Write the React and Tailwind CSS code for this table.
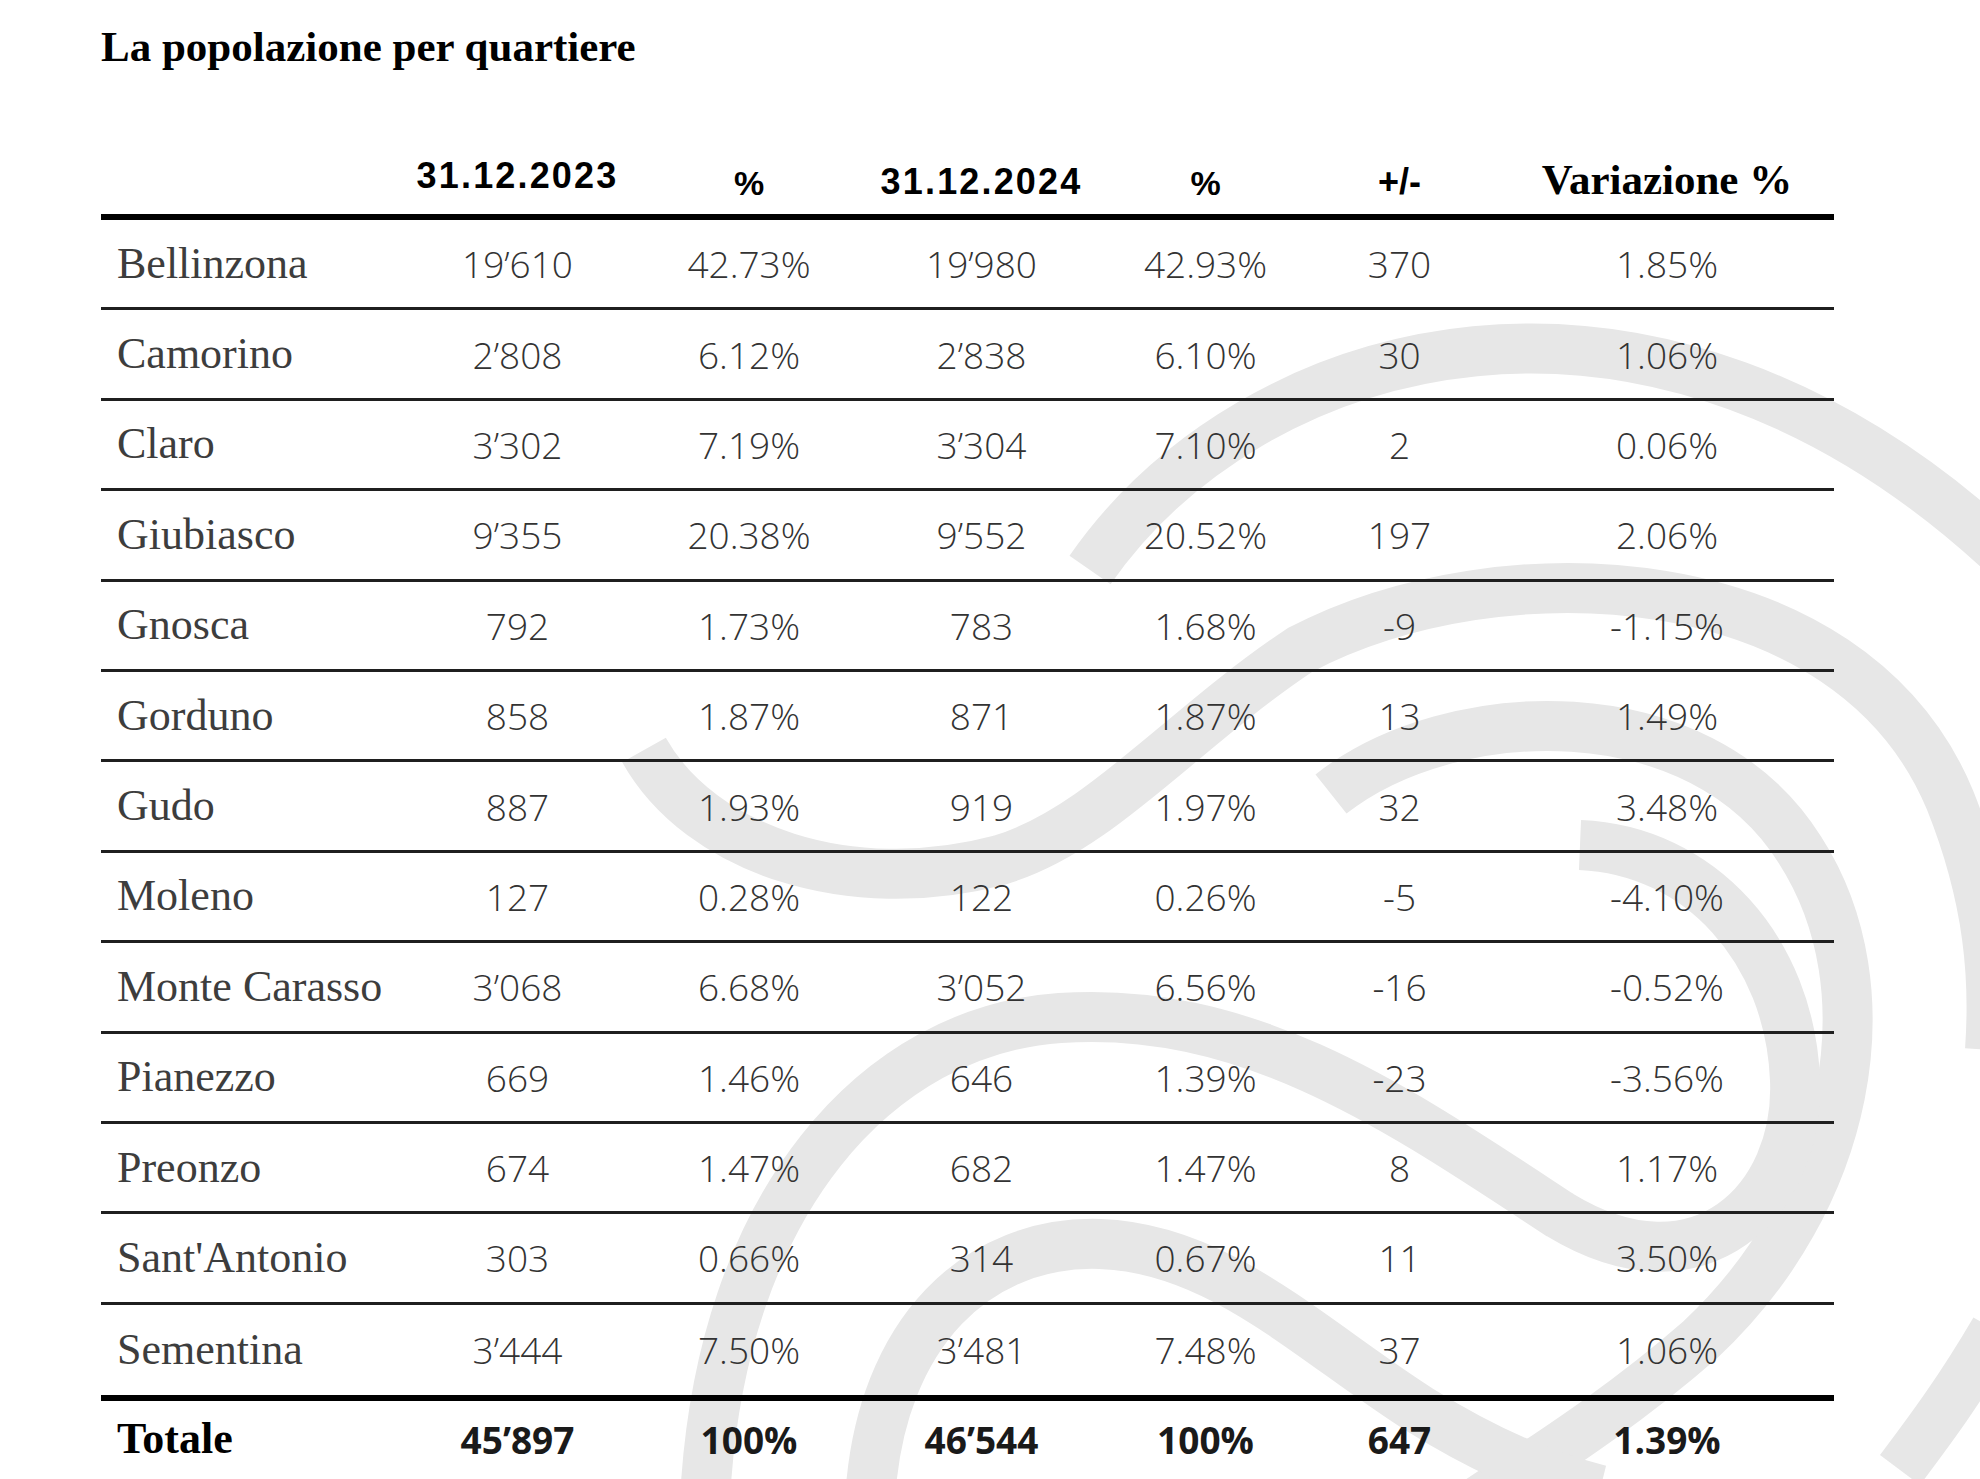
import React from 'react'

const ROWS = [
  ['Bellinzona', '19’610', '42.73%', '19’980', '42.93%', '370', '1.85%'],
  ['Camorino', '2’808', '6.12%', '2’838', '6.10%', '30', '1.06%'],
  ['Claro', '3’302', '7.19%', '3’304', '7.10%', '2', '0.06%'],
  ['Giubiasco', '9’355', '20.38%', '9’552', '20.52%', '197', '2.06%'],
  ['Gnosca', '792', '1.73%', '783', '1.68%', '-9', '-1.15%'],
  ['Gorduno', '858', '1.87%', '871', '1.87%', '13', '1.49%'],
  ['Gudo', '887', '1.93%', '919', '1.97%', '32', '3.48%'],
  ['Moleno', '127', '0.28%', '122', '0.26%', '-5', '-4.10%'],
  ['Monte Carasso', '3’068', '6.68%', '3’052', '6.56%', '-16', '-0.52%'],
  ['Pianezzo', '669', '1.46%', '646', '1.39%', '-23', '-3.56%'],
  ['Preonzo', '674', '1.47%', '682', '1.47%', '8', '1.17%'],
  ["Sant'Antonio", '303', '0.66%', '314', '0.67%', '11', '3.50%'],
  ['Sementina', '3’444', '7.50%', '3’481', '7.48%', '37', '1.06%'],
]

const TOTAL = ['Totale', '45’897', '100%', '46’544', '100%', '647', '1.39%']

// column widths add up to the 1733px table
const GRID = 'grid grid-cols-[301px_231px_232px_233px_215px_173px_348px]'

const serif = "font-['Liberation_Serif',serif]"
const sans = "font-['Open_Sans',sans-serif]"
const headSans = "font-['Liberation_Sans',Arial,sans-serif]"

// faint logo in the background
function Watermark() {
  return (
    <svg
      className="absolute inset-0 w-full h-full pointer-events-none"
      viewBox="0 0 1980 1479"
      fill="none"
      stroke="#e7e7e7"
      strokeWidth="50"
    >
      <path d="M1090 570 C1250 340 1650 220 2010 560" />
      <path d="M644 750 C700 850 850 900 1000 860 C1100 830 1180 730 1300 650 C1500 545 1850 560 1950 800 C1990 900 1995 980 1990 1050" />
      <path d="M1331 794 C1450 700 1700 690 1800 850 C1890 990 1850 1200 1700 1340 C1620 1410 1540 1460 1480 1500" />
      <path d="M705 1500 C720 1200 880 1030 1060 1018 C1250 1005 1400 1110 1560 1215 C1700 1300 1800 1200 1795 1080 C1790 950 1700 850 1580 845" />
      <path d="M870 1500 C880 1330 980 1240 1100 1244 C1220 1248 1310 1340 1420 1410 C1500 1460 1560 1480 1600 1490" />
      <path d="M1995 1330 C1960 1390 1930 1430 1900 1470" />
    </svg>
  )
}

function HeadCell({ children, font, size, pb }) {
  return (
    <div className={`flex items-end justify-center ${pb}`}>
      <span className={`${font} ${size} font-bold leading-none text-black whitespace-nowrap`}>{children}</span>
    </div>
  )
}

function DataRow({ cells, last }) {
  return (
    <div className={`${GRID} h-[90.4px] ${last ? '' : 'border-b-[3px] border-[#1f1f1f]'}`}>
      <div className="flex items-center pl-[16px]">
        <span className={`${serif} text-[44px] leading-none text-[#3d3d3d] whitespace-nowrap`}>{cells[0]}</span>
      </div>
      {cells.slice(1).map((c, i) => (
        <div key={i} className={`flex items-center justify-center ${i === 5 ? 'pl-[14px]' : ''}`}>
          <span className={`${sans} text-[37px] font-light leading-none text-[#333] whitespace-nowrap`}>{c}</span>
        </div>
      ))}
    </div>
  )
}

export default function App() {
  return (
    <div className="relative w-full h-[1479px] overflow-hidden bg-white">
      <Watermark />

      <div className="relative px-[101px] pt-[25px] w-[1935px]">
        <h1 className={`${serif} text-[43px] font-bold leading-none text-black`}>La popolazione per quartiere</h1>

        {/* header */}
        <div className={`${GRID} h-[146px]`}>
          <div />
          <HeadCell font={headSans} size="text-[36px] tracking-[0.06em]" pb="pb-[20px]">31.12.2023</HeadCell>
          <HeadCell font={headSans} size="text-[34px]" pb="pb-[14px]">%</HeadCell>
          <HeadCell font={headSans} size="text-[36px] tracking-[0.06em]" pb="pb-[14px]">31.12.2024</HeadCell>
          <HeadCell font={headSans} size="text-[34px]" pb="pb-[14px]">%</HeadCell>
          <HeadCell font={headSans} size="text-[36px]" pb="pb-[14px]">+/-</HeadCell>
          <div className="flex items-end justify-center pl-[14px] pb-[13px]">
            <span className={`${serif} text-[43px] font-bold leading-none text-black whitespace-nowrap`}>Variazione %</span>
          </div>
        </div>
        <div className="h-[6px] bg-black" />

        {ROWS.map((r, i) => (
          <DataRow key={r[0]} cells={r} last={i === ROWS.length - 1} />
        ))}
        <div className="h-[6px] bg-black" />

        {/* totals */}
        <div className={`${GRID} h-[76px]`}>
          <div className="flex items-center pl-[16px]">
            <span className={`${serif} text-[44px] font-bold leading-none text-black`}>{TOTAL[0]}</span>
          </div>
          {TOTAL.slice(1).map((c, i) => (
            <div key={i} className={`flex items-center justify-center ${i === 5 ? 'pl-[14px]' : ''}`}>
              <span className={`${sans} text-[37px] font-bold leading-none text-[#1a1a1a] whitespace-nowrap`}>{c}</span>
            </div>
          ))}
        </div>
      </div>
    </div>
  )
}
